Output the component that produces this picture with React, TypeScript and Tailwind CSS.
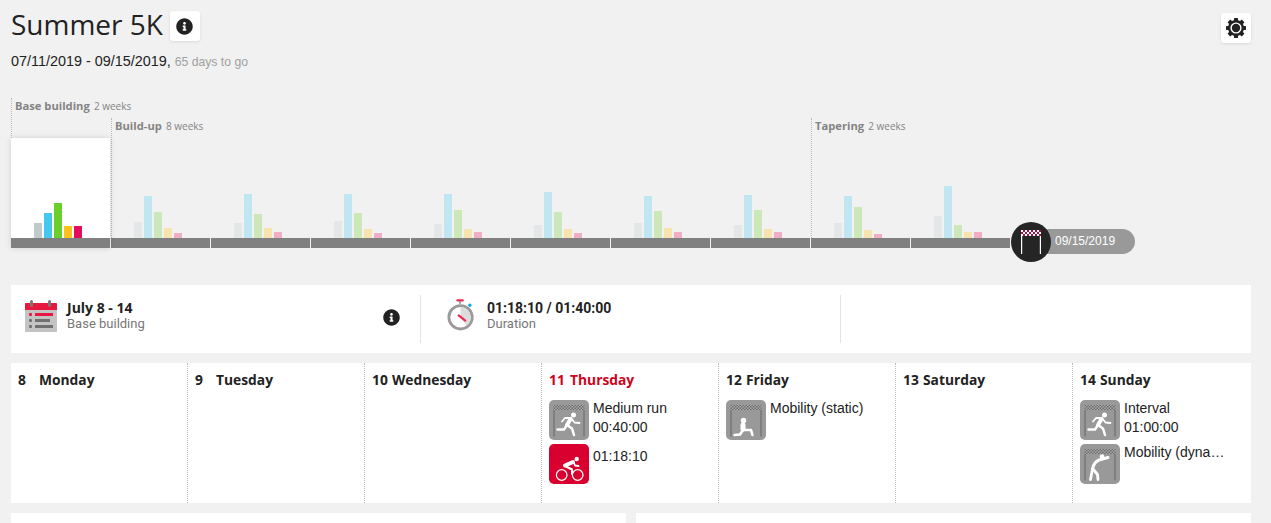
import React from "react"
import { FaInfoCircle } from "react-icons/fa"

const weeks = [
  { bars: [15, 25, 35, 12, 12], active: true },
  { bars: [16, 42, 26, 10, 5] },
  { bars: [15, 44, 24, 10, 6] },
  { bars: [17, 44, 25, 9, 5] },
  { bars: [14, 44, 28, 9, 6] },
  { bars: [13, 46, 26, 9, 5] },
  { bars: [15, 42, 27, 10, 6] },
  { bars: [13, 43, 28, 9, 6] },
  { bars: [15, 42, 31, 8, 4] },
  { bars: [22, 52, 13, 6, 6] },
]

const activeColors = ["bg-[#c0caca]", "bg-[#45c8f0]", "bg-[#6bcf2b]", "bg-[#fcc21b]", "bg-[#e20d5d]"]
const fadedColors = ["bg-[#e3e7e7]", "bg-[#c0e6f2]", "bg-[#cce8b8]", "bg-[#f6e3ae]", "bg-[#efaec6]"]

const WeekColumn = ({ week }: { week: { bars: number[]; active?: boolean } }) => (
  <div className="w-[100px] shrink-0">
    <div className={`w-[99px] ${week.active ? "shadow-[0_0_6px_rgba(0,0,0,0.14)]" : ""}`}>
      <div className={`h-[100px] flex items-end pl-[23px] gap-[2px] ${week.active ? "bg-white" : ""}`}>
        {week.bars.map((h, i) => (
          <div
            key={i}
            className={`w-[8px] ${week.active ? activeColors[i] : fadedColors[i]}`}
            style={{ height: h }}
          />
        ))}
      </div>
      <div className="h-[10px] bg-[#808080]" />
    </div>
  </div>
)

const PhaseLabel = ({ name, length }: { name: string; length: string }) => (
  <div className="h-[20px] pl-[4px] whitespace-nowrap text-[#848484] font-['Open_Sans',sans-serif] leading-[13px]">
    <span className="text-[11.200px] font-bold">{name}</span>{" "}
    <span className="text-[10px]">{length}</span>
  </div>
)

const FinishFlag = () => (
  <svg viewBox="0 0 40 40" className="w-[40px] h-[40px] shrink-0 relative z-10">
    <circle cx="20" cy="20" r="20" fill="#252525" />
    <g fill="#fff">
      <rect x="10" y="8" width="20" height="6" />
      <rect x="10" y="14" width="1.2" height="18" />
      <rect x="28.8" y="14" width="1.2" height="18" />
    </g>
    <path
      d="M12 8h2v2h-2zM16 8h2v2h-2zM20 8h2v2h-2zM24 8h2v2h-2zM28 8h2v2h-2zM10 10h2v2h-2zM14 10h2v2h-2zM18 10h2v2h-2zM22 10h2v2h-2zM26 10h2v2h-2zM12 12h2v2h-2zM16 12h2v2h-2zM20 12h2v2h-2zM24 12h2v2h-2zM28 12h2v2h-2z"
      fill="#a3123f"
    />
  </svg>
)

const GearIcon = () => (
  <svg viewBox="0 0 20 20" className="w-[20px] h-[20px]">
    <g fill="#222">
      {[0, 45, 90, 135].map((a) => (
        <rect key={a} x="8" y="0" width="4" height="20" rx="0.5" transform={`rotate(${a} 10 10)`} />
      ))}
      <circle cx="10" cy="10" r="8" />
    </g>
    <circle cx="10" cy="10" r="5.6" fill="#fff" />
    <circle cx="10" cy="10" r="4.2" fill="#222" />
  </svg>
)

const CalendarIcon = () => (
  <svg viewBox="0 0 32 32" className="w-[32px] h-[32px] -mt-[7px] shrink-0">
    <rect x="0" y="3" width="32" height="29" rx="1" fill="#c4c4c4" />
    <path d="M0 4a1 1 0 0 1 1-1h30a1 1 0 0 1 1 1v6H0z" fill="#e8173f" />
    <rect x="5" y="0" width="3" height="7" rx="1.5" fill="#777" />
    <rect x="23" y="0" width="3" height="7" rx="1.5" fill="#777" />
    <rect x="4" y="13" width="3" height="3" rx="1" fill="#e8173f" />
    <rect x="10" y="13" width="18" height="3" fill="#e8173f" />
    <rect x="4" y="19" width="3" height="3" rx="1" fill="#707070" />
    <rect x="10" y="19" width="15" height="3" fill="#707070" />
    <rect x="4" y="25" width="3" height="3" rx="1" fill="#707070" />
    <rect x="10" y="25" width="18" height="3" fill="#707070" />
  </svg>
)

const StopwatchIcon = () => (
  <svg viewBox="0 0 30 34" className="w-[28px] h-[32px] -mt-[8px] shrink-0">
    <rect x="10" y="0" width="8" height="2.5" rx="1" fill="#f0294f" />
    <rect x="13" y="2" width="2" height="3" fill="#999" />
    <circle cx="24.5" cy="6.5" r="1.8" fill="#1aa3e8" />
    <circle cx="14.5" cy="19.500" r="12.500" fill="#fff" stroke="#9a9a9a" strokeWidth="3" />
    <path d="M14.500 19.500V8.500A11 11 0 0 1 25.500 19.500A11 11 0 0 1 21 28.400z" fill="#dcdcdc" />
    <path d="M12.500 17.500l7 5.500" stroke="#f0294f" strokeWidth="2.4" strokeLinecap="round" />
  </svg>
)

const figures: Record<string, React.ReactNode> = {
  run: (
    <g fill="none" stroke="#fff" strokeLinecap="round" strokeLinejoin="round">
      <path d="M21.500 19L18 25" strokeWidth="4" />
      <path d="M21 18h-5l-3 3.500" strokeWidth="1.800" />
      <path d="M22 18l3.500 4.500 5 .5" strokeWidth="1.800" />
      <path d="M18 25l5 3.500 2 6.500" strokeWidth="2.500" />
      <path d="M18 25l-3 4.500h-6.500" strokeWidth="2.500" />
      <circle cx="24.500" cy="15" r="2.500" fill="#fff" stroke="none" />
    </g>
  ),
  lunge: (
    <g fill="none" stroke="#fff" strokeLinecap="round" strokeLinejoin="round">
      <path d="M17 25v4" strokeWidth="5" />
      <path d="M17 30h8l1.500 5" strokeWidth="2.600" />
      <path d="M17 30l-3 4.500-5.500 .5" strokeWidth="2.600" />
      <circle cx="17.500" cy="20.500" r="2.700" fill="#fff" stroke="none" />
    </g>
  ),
  stretch: (
    <g fill="none" stroke="#fff" strokeLinecap="round" strokeLinejoin="round">
      <path d="M28 13.500L19 16q-5 2-6.500 9" strokeWidth="3" />
      <path d="M12.500 25l-2 10.500" strokeWidth="2.800" />
      <path d="M13 25l4.500 5.500 .5 5" strokeWidth="2.800" />
      <circle cx="22" cy="12.500" r="2.300" fill="#fff" stroke="none" />
    </g>
  ),
}

const WorkoutIcon = ({ figure }: { figure: string }) => (
  <svg viewBox="0 0 40 40" className="w-[40px] h-[40px] rounded-[5px] bg-[#999999] shrink-0">
    <defs>
      <pattern id="check" width="3" height="3" patternUnits="userSpaceOnUse">
        <rect width="3" height="3" fill="#a8a8a8" />
        <rect width="1.500" height="1.500" fill="#6c6c6c" />
        <rect x="1.500" y="1.500" width="1.500" height="1.500" fill="#6c6c6c" />
      </pattern>
    </defs>
    <rect x="4.500" y="5" width="31" height="5" fill="url(#check)" />
    <rect x="4.500" y="10" width="1" height="26.500" fill="#666666" />
    <rect x="34.500" y="10" width="1" height="26.500" fill="#666666" />
    {figures[figure]}
  </svg>
)

const BikeIcon = () => (
  <svg viewBox="0 0 40 40" className="w-[40px] h-[40px] rounded-[5px] bg-[#d9002f] shrink-0">
    <circle cx="12.700" cy="31" r="5.300" fill="none" stroke="#fff" strokeWidth="1.200" />
    <circle cx="28.700" cy="31" r="5.300" fill="none" stroke="#fff" strokeWidth="1.200" />
    <circle cx="27.700" cy="15" r="2.200" fill="#fff" />
    <g fill="none" stroke="#fff" strokeLinecap="round" strokeLinejoin="round">
      <path d="M16 21.500l8-3.500" strokeWidth="4" />
      <path d="M24.500 18l1.500 3.500 3.500 .5" strokeWidth="1.800" />
      <path d="M17 22.500l6 3v4.500" strokeWidth="2" />
    </g>
  </svg>
)

type Item = { icon: React.ReactNode; lines: string[]; offset?: boolean }
type Day = { num: string; name: string; numWidth: string; today?: boolean; items?: Item[] }

const days: Day[] = [
  { num: "8", name: "Monday", numWidth: "w-[21px]" },
  { num: "9", name: "Tuesday", numWidth: "w-[21px]" },
  { num: "10", name: "Wednesday", numWidth: "w-[20px]" },
  {
    num: "11",
    name: "Thursday",
    numWidth: "w-[21px]",
    today: true,
    items: [
      { icon: <WorkoutIcon figure="run" />, lines: ["Medium run", "00:40:00"] },
      { icon: <BikeIcon />, lines: ["01:18:10"], offset: true },
    ],
  },
  {
    num: "12",
    name: "Friday",
    numWidth: "w-[20px]",
    items: [{ icon: <WorkoutIcon figure="lunge" />, lines: ["Mobility (static)"] }],
  },
  { num: "13", name: "Saturday", numWidth: "w-[20px]" },
  {
    num: "14",
    name: "Sunday",
    numWidth: "w-[20px]",
    items: [
      { icon: <WorkoutIcon figure="run" />, lines: ["Interval", "01:00:00"] },
      { icon: <WorkoutIcon figure="stretch" />, lines: ["Mobility (dynamic)"] },
    ],
  },
]

const DayCell = ({ day, last }: { day: Day; last: boolean }) => (
  <div
    className={`min-w-0 pl-[7px] pr-[20px] pt-[8px] ${
      last ? "flex-1" : "w-[177px] shrink-0 border-r border-dotted border-[#bbbbbb]"
    }`}>
    <div
      className={`flex h-[18px] items-center text-[13.800px] font-bold font-['Open_Sans',sans-serif] ${
        day.today ? "text-[#d0021b]" : "text-[#222222]"
      }`}>
      <span className={day.numWidth}>{day.num}</span>
      <span>{day.name}</span>
    </div>
    <div className="flex flex-col gap-[4px] mt-[11px]">
      {day.items?.map((item, i) => (
        <div key={i} className="flex gap-[4px] h-[40px]">
          {item.icon}
          <div
            className={`min-w-0 text-[14px] leading-[19px] text-[#222222] font-['Liberation_Sans',sans-serif] ${
              item.offset ? "mt-[3px]" : "-mt-[1px]"
            }`}>
            {item.lines.map((line) => (
              <div key={line} className="truncate">
                {line}
              </div>
            ))}
          </div>
        </div>
      ))}
    </div>
  </div>
)

export default function App() {
  return (
    <div className="w-[1271px] h-[523px] overflow-hidden bg-[#f1f1f1] pl-[11px] pr-[20px] font-['Liberation_Sans',sans-serif]">
      <div className="flex justify-between h-[45px] pt-[11px]">
        <div className="flex items-start gap-[7px]">
          <h1 className="text-[28px] leading-[26px] text-[#222222] font-['Open_Sans',sans-serif]">
            Summer 5K
          </h1>
          <button className="w-[30px] h-[30px] bg-white rounded-[3px] shadow-[0_1px_3px_rgba(0,0,0,0.1)] flex items-center justify-center">
            <FaInfoCircle className="text-[#222222] text-[17px]" />
          </button>
        </div>
        <button className="w-[30px] h-[30px] mt-[2px] bg-white rounded-[3px] shadow-[0_1px_3px_rgba(0,0,0,0.1)] flex items-center justify-center">
          <GearIcon />
        </button>
      </div>

      <p className="mt-[8px] h-[17px] text-[14.400px] leading-[17px] text-[#222222] whitespace-nowrap">
        07/11/2019 - 09/15/2019,{" "}
        <span className="text-[12.200px] text-[#a0a0a0]">65 days to go</span>
      </p>

      <div className="flex items-end mt-[28px] h-[150px]">
        <div className="w-[100px] shrink-0 relative z-10">
          <div className="h-[40px] border-l border-dotted border-[#bbbbbb]">
            <div className="-ml-[1px]">
              <PhaseLabel name="Base building" length="2 weeks" />
            </div>
          </div>
          <WeekColumn week={weeks[0]} />
        </div>
        <div className="w-[700px] shrink-0 relative">
          <div className="absolute left-0 top-0 bottom-[10px] border-l border-dotted border-[#bbbbbb]" />
          <PhaseLabel name="Build-up" length="8 weeks" />
          <div className="flex">
            {weeks.slice(1, 8).map((w, i) => (
              <WeekColumn key={i} week={w} />
            ))}
          </div>
        </div>
        <div className="w-[200px] shrink-0 relative">
          <div className="absolute left-0 top-0 bottom-[10px] border-l border-dotted border-[#bbbbbb]" />
          <PhaseLabel name="Tapering" length="2 weeks" />
          <div className="flex">
            {weeks.slice(8).map((w, i) => (
              <WeekColumn key={i} week={w} />
            ))}
          </div>
        </div>
        <div className="flex items-center -mb-[14px]">
          <FinishFlag />
          <div className="h-[25px] w-[96px] -ml-[12px] -mt-[1px] pl-[16px] rounded-r-full bg-[#999999] text-white text-[12px] leading-[25px]">
            09/15/2019
          </div>
        </div>
      </div>

      <div className="mt-[37px] h-[68px] bg-white flex items-center">
        <div className="w-[410px] h-[48px] flex items-center pl-[14px] pr-[20px] border-r border-[#e4e4e4]">
          <CalendarIcon />
          <div className="ml-[10px] flex-1 -mt-[6px]">
            <div className="text-[14px] leading-[16px] font-bold text-[#222222] font-['Open_Sans',sans-serif]">
              July 8 - 14
            </div>
            <div className="text-[13px] leading-[16px] text-[#777777] font-['Roboto',sans-serif]">
              Base building
            </div>
          </div>
          <FaInfoCircle className="w-[17px] h-[17px] shrink-0 text-[#222222] -mt-[4px]" />
        </div>
        <div className="w-[420px] h-[48px] flex items-center pl-[26px] border-r border-[#e4e4e4]">
          <StopwatchIcon />
          <div className="ml-[12px] -mt-[6px]">
            <div className="text-[14px] leading-[16px] font-bold text-[#222222] font-['Roboto',sans-serif]">
              01:18:10 / 01:40:00
            </div>
            <div className="text-[13px] leading-[16px] text-[#777777] font-['Roboto',sans-serif]">
              Duration
            </div>
          </div>
        </div>
      </div>

      <div className="mt-[10px] h-[140px] bg-white flex">
        {days.map((d, i) => (
          <DayCell key={d.num} day={d} last={i === days.length - 1} />
        ))}
      </div>

      <div className="mt-[10px] flex gap-[10px]">
        <div className="flex-1 h-[40px] bg-white" />
        <div className="flex-1 h-[40px] bg-white" />
      </div>
    </div>
  )
}
